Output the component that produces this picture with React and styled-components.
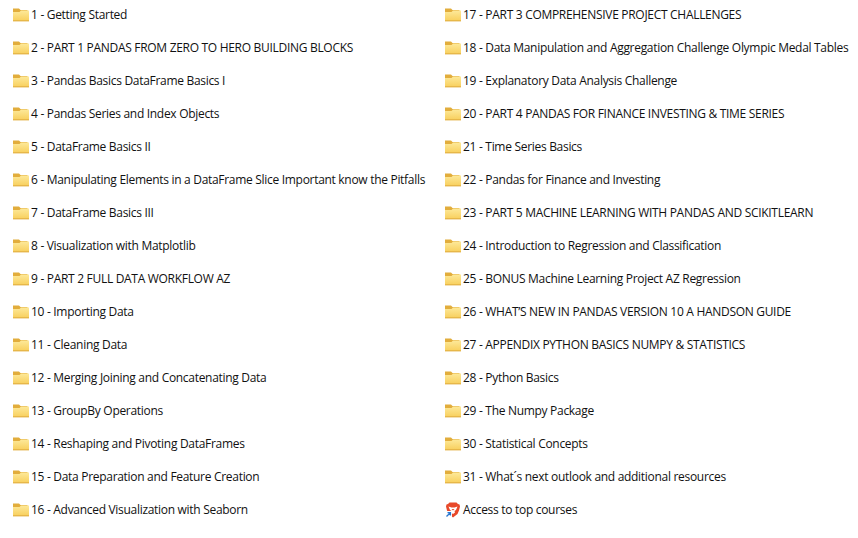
import React from "react";
import styled, { createGlobalStyle } from "styled-components";

const Global = createGlobalStyle`
  html, body { margin: 0; padding: 0; background: #fff; }
  body { font-family: "Open Sans", "Noto Sans", "Liberation Sans", sans-serif; overflow: hidden; }
`;

const Page = styled.div`
  width: 858px;
  height: 538px;
  overflow: hidden;
  box-sizing: border-box;
  padding: 0 0 0 13px;
  display: grid;
  grid-template-columns: 432px 413px;
`;

const Column = styled.div`
  display: flex;
  flex-direction: column;
  margin-top: -2px;
`;

const Row = styled.div`
  height: 33px;
  display: flex;
  align-items: center;
  gap: 2px;
  white-space: nowrap;
`;

const Label = styled.span`
  font-size: 12px;
  letter-spacing: -0.3px;
  color: #111;
  line-height: 16px;
`;

const IconBox = styled.svg`
  width: 16px;
  height: 16px;
  flex: none;
  display: block;
`;

const FolderIcon = () => (
  <IconBox viewBox="0 0 16 16">
    <defs>
      <linearGradient id="folderBody" x1="0" y1="0" x2="0" y2="1">
        <stop offset="0" stopColor="#fde99a" />
        <stop offset="1" stopColor="#f8cf5c" />
      </linearGradient>
    </defs>
    <path d="M0 1.5 H6 L7.5 3 H14.5 V6 H0 Z" fill="#e2ad3c" />
    <path d="M0 5 H6.5 L8 3.5 H16 V14 H0 Z" fill="url(#folderBody)" />
    <path d="M0 13.2 H16 V14.4 H0 Z" fill="#e3b144" />
  </IconBox>
);

const BraveIcon = () => (
  <IconBox viewBox="0 0 16 16">
    <path d="M4.5 0.5 H11.5 L13 2 L14.5 2.5 L15 4.5 L14 8.5 L12.5 12 L8 15.5 L3.5 12 L2 8.5 L1 4.5 L1.5 2.5 L3 2 Z" fill="#e8492a" />
    <path d="M3.5 4.5 L6.5 5.5 H9.5 L12.5 4.5 L11 8 L9.5 9 L10 10.5 L8 12 L6 10.5 L6.5 9 L5 8 Z" fill="#fff" />
    <path d="M6.5 7 H9.5 L8 8.5 Z" fill="#e8492a" />
    <path d="M0 9 H7 V16 H0 Z" fill="#fff" />
    <path d="M1.5 14.5 L5 11 M2.5 10.6 H5.4 V13.5" stroke="#2b78d0" strokeWidth="1.4" fill="none" />
  </IconBox>
);

const left = [
  "1 - Getting Started",
  "2 - PART 1 PANDAS FROM ZERO TO HERO BUILDING BLOCKS",
  "3 - Pandas Basics DataFrame Basics I",
  "4 - Pandas Series and Index Objects",
  "5 - DataFrame Basics II",
  "6 - Manipulating Elements in a DataFrame Slice Important know the Pitfalls",
  "7 - DataFrame Basics III",
  "8 - Visualization with Matplotlib",
  "9 - PART 2 FULL DATA WORKFLOW AZ",
  "10 - Importing Data",
  "11 - Cleaning Data",
  "12 - Merging Joining and Concatenating Data",
  "13 - GroupBy Operations",
  "14 - Reshaping and Pivoting DataFrames",
  "15 - Data Preparation and Feature Creation",
  "16 - Advanced Visualization with Seaborn",
];

const right = [
  "17 - PART 3 COMPREHENSIVE PROJECT CHALLENGES",
  "18 - Data Manipulation and Aggregation Challenge Olympic Medal Tables",
  "19 - Explanatory Data Analysis Challenge",
  "20 - PART 4 PANDAS FOR FINANCE INVESTING & TIME SERIES",
  "21 - Time Series Basics",
  "22 - Pandas for Finance and Investing",
  "23 - PART 5 MACHINE LEARNING WITH PANDAS AND SCIKITLEARN",
  "24 - Introduction to Regression and Classification",
  "25 - BONUS Machine Learning Project AZ Regression",
  "26 - WHAT\u2019S NEW IN PANDAS VERSION 10 A HANDSON GUIDE",
  "27 - APPENDIX PYTHON BASICS NUMPY & STATISTICS",
  "28 - Python Basics",
  "29 - The Numpy Package",
  "30 - Statistical Concepts",
  "31 - What\u00b4s next outlook and additional resources",
];

export default function App() {
  return (
    <>
      <Global />
      <Page>
        <Column>
          {left.map((t) => (
            <Row key={t}><FolderIcon /><Label>{t}</Label></Row>
          ))}
        </Column>
        <Column>
          {right.map((t) => (
            <Row key={t}><FolderIcon /><Label>{t}</Label></Row>
          ))}
          <Row><BraveIcon /><Label>Access to top courses</Label></Row>
        </Column>
      </Page>
    </>
  );
}
